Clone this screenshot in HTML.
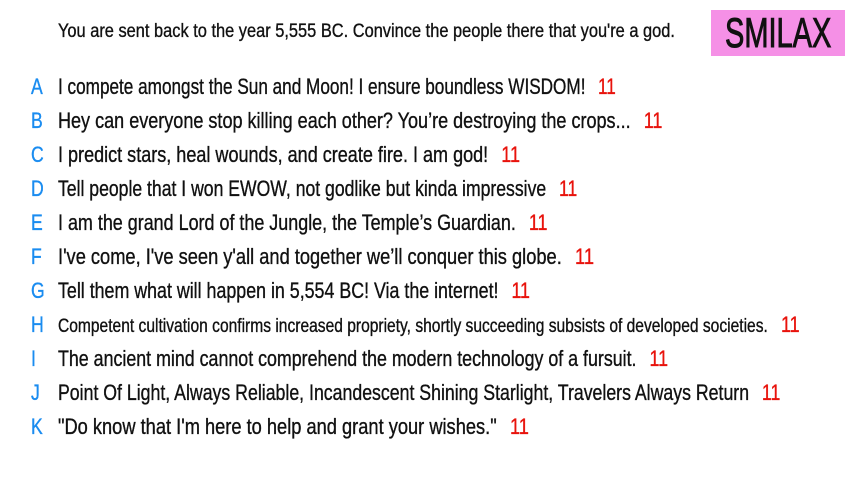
<!DOCTYPE html>
<html><head><meta charset="utf-8"><style>
body{margin:0;width:853px;height:480px;background:#fff;position:relative;overflow:hidden;font-family:"Liberation Sans",sans-serif;color:#111;-webkit-text-stroke:0.35px}
.h{position:absolute;left:58px;top:21px;font-size:19px;white-space:nowrap;transform:scaleX(0.863);transform-origin:left}
.s{position:absolute;left:711px;top:10px;width:134px;height:46px;background:#f590e6;overflow:hidden}
.s span{position:absolute;left:14px;top:0;font-size:42px;line-height:46px;color:#111;transform:scaleX(0.69);transform-origin:left;-webkit-text-stroke:1px;white-space:nowrap}
.r{position:absolute;left:0;width:853px;height:34px;line-height:34px;font-size:22px;white-space:nowrap}
.r b{font-weight:normal;position:absolute;left:31px;color:#1a8cf0;display:inline-block;transform:scaleX(0.8);transform-origin:left}
.r span{position:absolute;left:58px;display:inline-block;transform-origin:left}
.r i{font-style:normal;color:#e8130c;margin-left:16px}
</style></head><body>
<div class="h">You are sent back to the year 5,555 BC. Convince the people there that you're a god.</div>
<div class="s"><span>SMILAX</span></div>
<div class="r" style="top:70px"><b>A</b><span style="transform:scaleX(.78)">I compete amongst the Sun and Moon! I ensure boundless WISDOM!<i>11</i></span></div>
<div class="r" style="top:104px"><b>B</b><span style="transform:scaleX(.82)">Hey can everyone stop killing each other? You’re destroying the crops...<i>11</i></span></div>
<div class="r" style="top:138px"><b>C</b><span style="transform:scaleX(.82)">I predict stars, heal wounds, and create fire. I am god!<i>11</i></span></div>
<div class="r" style="top:172px"><b>D</b><span style="transform:scaleX(.80)">Tell people that I won EWOW, not godlike but kinda impressive<i>11</i></span></div>
<div class="r" style="top:206px"><b>E</b><span style="transform:scaleX(.815)">I am the grand Lord of the Jungle, the Temple’s Guardian.<i>11</i></span></div>
<div class="r" style="top:240px"><b>F</b><span style="transform:scaleX(.83)">I've come, I've seen y'all and together we’ll conquer this globe.<i>11</i></span></div>
<div class="r" style="top:274px"><b>G</b><span style="transform:scaleX(.81)">Tell them what will happen in 5,554 BC! Via the internet!<i>11</i></span></div>
<div class="r" style="top:308px"><b>H</b><span style="transform:scaleX(.82);font-size:19px">Competent cultivation confirms increased propriety, shortly succeeding subsists of developed societies.<i style="font-size:22px">11</i></span></div>
<div class="r" style="top:342px"><b>I</b><span style="transform:scaleX(.81)">The ancient mind cannot comprehend the modern technology of a fursuit.<i>11</i></span></div>
<div class="r" style="top:376px"><b>J</b><span style="transform:scaleX(.805)">Point Of Light, Always Reliable, Incandescent Shining Starlight, Travelers Always Return<i>11</i></span></div>
<div class="r" style="top:410px"><b>K</b><span style="transform:scaleX(.83)">"Do know that I'm here to help and grant your wishes."<i>11</i></span></div>
</body></html>
